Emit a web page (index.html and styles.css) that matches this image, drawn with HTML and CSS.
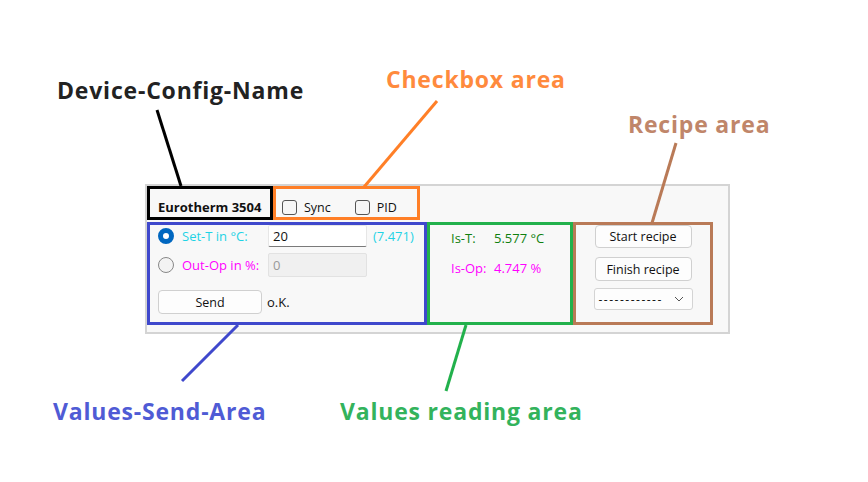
FILE: index.html
```html
<!DOCTYPE html>
<html lang="en">
<head>
  <meta charset="UTF-8">
  <title>Device panel</title>
  <link rel="stylesheet" href="styles.css">
</head>
<body>
  <div class="stage">
    <div class="panel">
      <div class="top-row">
        <div class="zone zone-name"><span class="device-name">Eurotherm 3504</span></div>
        <div class="zone zone-check">
          <label class="check"><span class="box"></span>Sync</label>
          <label class="check"><span class="box"></span>PID</label>
        </div>
      </div>
      <div class="main-row">
        <div class="zone zone-send">
          <div class="send-line">
            <span class="radio checked"></span>
            <span class="lbl cyan">Set-T in °C:</span>
            <span class="field">20</span>
            <span class="cyan">(7.471)</span>
          </div>
          <div class="send-line">
            <span class="radio"></span>
            <span class="lbl magenta">Out-Op in %:</span>
            <span class="field disabled">0</span>
          </div>
          <div class="send-line send-btn-line">
            <button class="btn btn-send">Send</button>
            <span>o.K.</span>
          </div>
        </div>
        <div class="zone zone-read">
          <div class="read-line green-text"><span class="read-key">Is-T:</span><span>5.577 °C</span></div>
          <div class="read-line magenta"><span class="read-key">Is-Op:</span><span>4.747 %</span></div>
        </div>
        <div class="zone zone-recipe">
          <button class="btn btn-recipe">Start recipe</button>
          <button class="btn btn-recipe">Finish recipe</button>
          <div class="select">
            <span class="dashes">------------</span>
            <svg width="10" height="6" viewBox="0 0 10 6"><path d="M1 1l4 4 4-4" fill="none" stroke="#555" stroke-width="1"/></svg>
          </div>
        </div>
      </div>
    </div>

    <!-- annotations -->
    <svg class="pointers" width="868" height="482" viewBox="0 0 868 482">
      <line x1="157" y1="110" x2="181" y2="186" stroke="#000" stroke-width="3"/>
      <line x1="437" y1="101" x2="364" y2="187" stroke="#ff7f27" stroke-width="3"/>
      <line x1="676" y1="143" x2="652" y2="223" stroke="#b97a57" stroke-width="3"/>
      <line x1="238" y1="325" x2="182" y2="381" stroke="#3f48cc" stroke-width="3"/>
      <line x1="466" y1="325" x2="446" y2="391" stroke="#22b14c" stroke-width="3"/>
    </svg>
    <div class="note note-name">Device-Config-Name</div>
    <div class="note note-check">Checkbox area</div>
    <div class="note note-recipe">Recipe area</div>
    <div class="note note-send">Values-Send-Area</div>
    <div class="note note-read">Values reading area</div>
  </div>
</body>
</html>
```

FILE: styles.css
```css
body {
  margin: 0;
  background: #fff;
  font-family: 'Open Sans', 'Noto Sans', sans-serif;
  font-size: 12px;
  color: #111;
}
.stage {
  position: relative;
  width: 868px;
  height: 482px;
  overflow: hidden;
  padding-top: 184px;
  box-sizing: border-box;
}
.panel {
  margin-left: 145px;
  width: 581px;
  height: 146px;
  border: 2px solid #d4d4d4;
  background: #f8f8f8;
}
.top-row {
  display: flex;
  height: 34px;
  margin-bottom: 2px;
}
.main-row {
  display: flex;
  height: 103px;
}
.zone {
  box-sizing: border-box;
  border: 3px solid;
}
.zone-name {
  width: 126px;
  border-color: #000;
  display: flex;
  align-items: flex-end;
  padding: 0 0 1px 8px;
}
.device-name {
  font-weight: 700;
  font-size: 13px;
}
.zone-check {
  width: 147px;
  border-color: #ff7f27;
  display: flex;
  align-items: flex-end;
  gap: 24px;
  padding: 0 0 1px 6px;
  font-size: 12.5px;
}
.check {
  display: flex;
  align-items: center;
  gap: 7px;
}
.box {
  width: 13px;
  height: 13px;
  border: 1px solid #555;
  border-radius: 3px;
  background: #f6f6f6;
}
.zone-send {
  width: 280px;
  border-color: #3f48cc;
  padding: 0 0 0 8px;
  font-size: 13px;
}
.send-line {
  display: flex;
  align-items: center;
  height: 22px;
  margin-bottom: 7px;
}
.send-btn-line {
  margin-top: 14px;
  height: 24px;
}
.radio {
  width: 14px;
  height: 14px;
  border: 1px solid #888;
  border-radius: 50%;
  background: #f3f3f3;
  box-sizing: content-box;
}
.radio.checked {
  width: 6px;
  height: 6px;
  border: 5px solid #0067c0;
  background: #fff;
}
.lbl {
  margin-left: 8px;
  width: 86px;
}
.cyan {
  color: #1fd3e5;
}
.magenta {
  color: #ff00ff;
}
.green-text {
  color: #108010;
}
.field {
  box-sizing: border-box;
  width: 99px;
  height: 22px;
  margin-right: 6px;
  padding: 0 4px;
  display: flex;
  align-items: center;
  font-size: 13px;
  background: #fff;
  border: 1px solid #e6e6e6;
  border-bottom-color: #7a7a7a;
  border-radius: 2px;
}
.field.disabled {
  height: 24px;
  background: #f0f0f0;
  border: 1px solid #e2e2e2;
  color: #999;
}
.btn {
  font-family: inherit;
  font-size: 12px;
  color: #111;
  background: #fdfdfd;
  border: 1px solid #d0d0d0;
  border-radius: 4px;
  padding: 0;
}
.btn-send {
  width: 104px;
  height: 24px;
  margin-right: 5px;
  font-size: 12.5px;
}
.zone-read {
  width: 146px;
  border-color: #22b14c;
  padding: 4px 0 0 21px;
  font-size: 13px;
}
.read-line {
  display: flex;
  height: 18px;
  align-items: center;
  margin-bottom: 12px;
}
.read-key {
  width: 43px;
}
.zone-recipe {
  width: 140px;
  border-color: #b97a57;
  display: flex;
  flex-direction: column;
  align-items: center;
  gap: 9px;
}
.btn-recipe {
  width: 97px;
  height: 24px;
  font-size: 12.5px;
}
.btn-recipe:first-child {
  height: 23px;
}
.select {
  box-sizing: border-box;
  width: 99px;
  height: 22px;
  margin-top: -2px;
  padding: 0 8px 0 4px;
  display: flex;
  align-items: center;
  justify-content: space-between;
  background: #fdfdfd;
  border: 1px solid #d4d4d4;
  border-radius: 3px;
}
.dashes {
  font-size: 12px;
  letter-spacing: 1.5px;
}
.pointers {
  position: absolute;
  left: 0;
  top: 0;
  pointer-events: none;
}
.note {
  position: absolute;
  font-family: 'Open Sans', sans-serif;
  font-weight: 700;
  font-size: 23px;
  line-height: 30px;
  letter-spacing: 0.8px;
  white-space: nowrap;
}
.note-name {
  left: 57px;
  top: 75px;
  color: #222;
}
.note-check {
  left: 386px;
  top: 64px;
  color: #ff8a3d;
}
.note-recipe {
  left: 628px;
  top: 109px;
  color: #c0866a;
}
.note-send {
  left: 53px;
  top: 396px;
  color: #4f5bd5;
}
.note-read {
  left: 340px;
  top: 396px;
  color: #33b35c;
}
```
